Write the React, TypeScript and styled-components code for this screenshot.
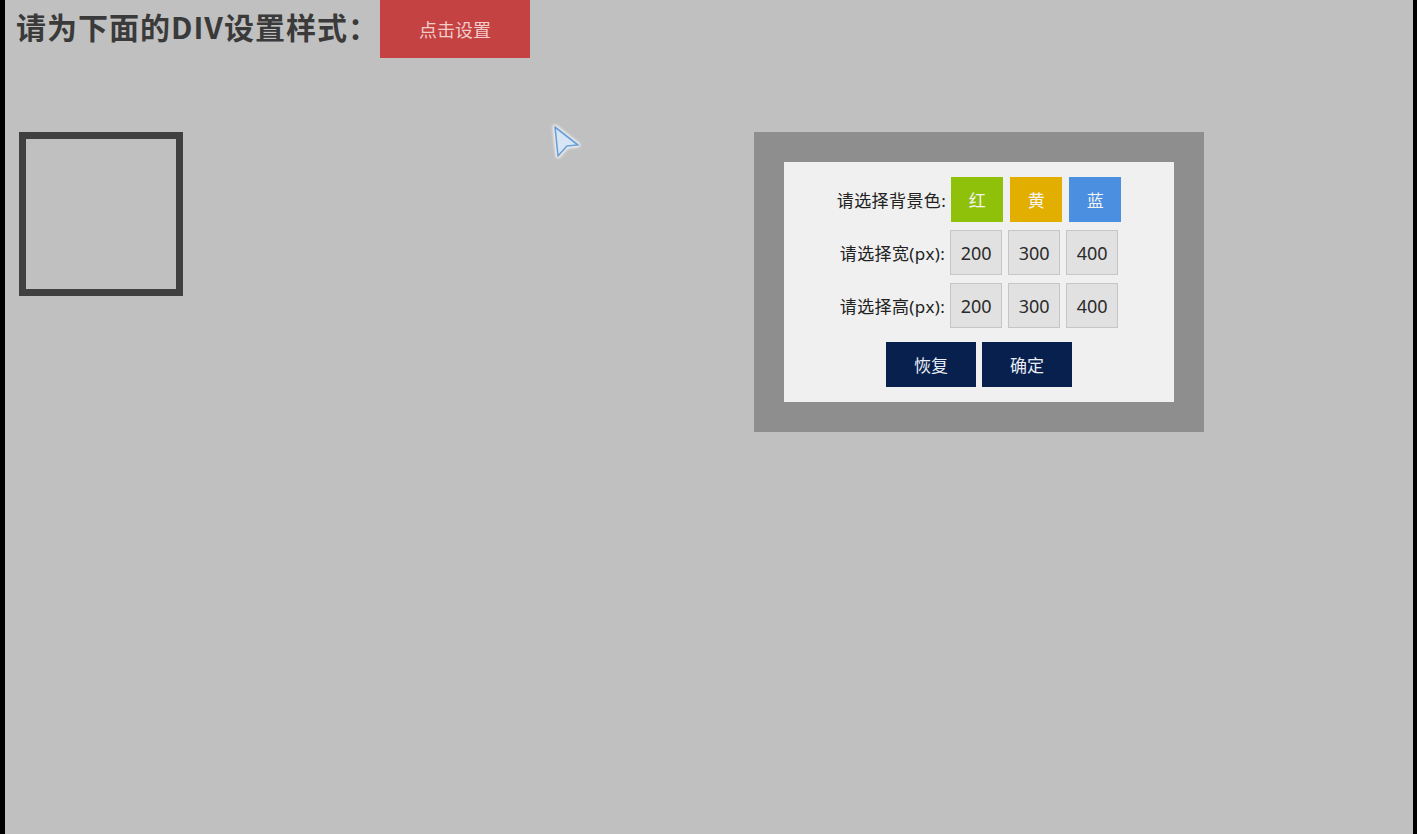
import React, { useState } from "react";
import styled, { createGlobalStyle } from "styled-components";

const GlobalStyle = createGlobalStyle`
  html, body {
    margin: 0;
    padding: 0;
    background-color: #000;
  }
  * {
    box-sizing: border-box;
  }
`;

const FONT = `"Noto Sans", "Noto Sans CJK SC", "Microsoft YaHei", sans-serif`;
const CJK_FONT = `"Noto Sans CJK SC", "Microsoft YaHei", sans-serif`;

const Page = styled.div`
  position: relative;
  min-height: 834px;
  height: 100vh;
  background-color: #c0c0c0;
  border-left: 5px solid #000;
  border-right: 4px solid #000;
  font-family: ${FONT};
  overflow: hidden;
`;

const Header = styled.div`
  display: flex;
  align-items: flex-start;
  padding-left: 11px;
`;

const Title = styled.h1`
  margin: 0;
  width: 364px;
  font-family: ${CJK_FONT};
  font-size: 30px;
  font-weight: 700;
  line-height: 52px;
  letter-spacing: 1px;
  color: #3a3a3a;
  white-space: nowrap;
`;

const SetButton = styled.button`
  width: 150px;
  height: 58px;
  border: none;
  background-color: #c44241;
  color: #f1cccb;
  font-family: ${FONT};
  font-size: 18px;
  cursor: pointer;
`;

const Stage = styled.div`
  display: flex;
  align-items: flex-start;
  margin-top: 74px;
  padding-left: 14px;
`;

const Target = styled.div`
  width: 150px;
  height: 150px;
  border: 7px solid #404040;
  box-sizing: content-box;
`;

const Dialog = styled.div`
  margin-left: 571px;
  width: 450px;
  height: 300px;
  padding: 30px;
  background-color: #8e8e8e;
`;

const Panel = styled.div`
  height: 240px;
  background-color: #f0f0f0;
  padding: 15px 0;
  display: flex;
  flex-direction: column;
  gap: 8px;
`;

const Row = styled.div<{ $extraTop?: number }>`
  display: flex;
  justify-content: center;
  align-items: center;
  height: 45px;
  margin-top: ${(p) => p.$extraTop || 0}px;
`;

const Label = styled.span`
  font-size: 17px;
  color: #222;
  margin-right: 5px;
  letter-spacing: 0.4px;
  white-space: nowrap;
`;

const Options = styled.div<{ $gap: number }>`
  display: flex;
  gap: ${(p) => p.$gap}px;
`;

const ColorButton = styled.button<{ $bg: string }>`
  width: 52px;
  height: 45px;
  border: none;
  background-color: ${(p) => p.$bg};
  color: #f4f4f4;
  font-family: ${FONT};
  font-size: 17px;
  cursor: pointer;
`;

const SizeButton = styled.button`
  width: 52px;
  height: 45px;
  border: 1px solid #c6c6c6;
  background-color: #e1e1e1;
  color: #2a2a2a;
  font-family: ${FONT};
  font-size: 18px;
  cursor: pointer;
`;

const ActionButton = styled.button`
  width: 90px;
  height: 45px;
  border: none;
  background-color: #08204e;
  color: #e8ecf4;
  font-family: ${FONT};
  font-size: 17px;
  cursor: pointer;
`;

const Pointer = styled.svg`
  position: absolute;
  left: 543px;
  top: 123px;
  pointer-events: none;
`;

const colors = [
  { name: "红", bg: "#8fc00a" },
  { name: "黄", bg: "#e2ae00" },
  { name: "蓝", bg: "#4b8fe1" },
];

const sizes = [200, 300, 400];

const App: React.FC = () => {
  const [picked, setPicked] = useState<string>("");

  return (
    <Page data-picked={picked}>
      <GlobalStyle />
      <Header>
        <Title>请为下面的DIV设置样式：</Title>
        <SetButton onClick={() => setPicked("")}>点击设置</SetButton>
      </Header>
      <Stage>
        <Target />
        <Dialog>
          <Panel>
            <Row>
              <Label>请选择背景色:</Label>
              <Options $gap={7}>
                {colors.map((c) => (
                  <ColorButton
                    key={c.name}
                    $bg={c.bg}
                    onClick={() => setPicked(c.name)}
                  >
                    {c.name}
                  </ColorButton>
                ))}
              </Options>
            </Row>
            <Row>
              <Label>请选择宽(px):</Label>
              <Options $gap={6}>
                {sizes.map((s) => (
                  <SizeButton key={s}>{s}</SizeButton>
                ))}
              </Options>
            </Row>
            <Row>
              <Label>请选择高(px):</Label>
              <Options $gap={6}>
                {sizes.map((s) => (
                  <SizeButton key={s}>{s}</SizeButton>
                ))}
              </Options>
            </Row>
            <Row $extraTop={6}>
              <Options $gap={6}>
                <ActionButton>恢复</ActionButton>
                <ActionButton>确定</ActionButton>
              </Options>
            </Row>
          </Panel>
        </Dialog>
      </Stage>
      {/* mouse pointer captured in the screenshot */}
      <Pointer width="36" height="40" viewBox="0 0 36 40">
        <defs>
          <filter id="glow" x="-30%" y="-30%" width="160%" height="160%">
            <feGaussianBlur stdDeviation="1.4" />
          </filter>
        </defs>
        <path
          d="M7 4 L30 22 L19 23 L10 33 Z"
          fill="none"
          stroke="#ffffff"
          strokeWidth="4"
          strokeLinejoin="round"
          filter="url(#glow)"
        />
        <path
          d="M7 4 L30 22 L19 23 L10 33 Z"
          fill="#d6e6f6"
          stroke="#6a9fd6"
          strokeWidth="1.6"
          strokeLinejoin="round"
        />
      </Pointer>
    </Page>
  );
};

export default App;
